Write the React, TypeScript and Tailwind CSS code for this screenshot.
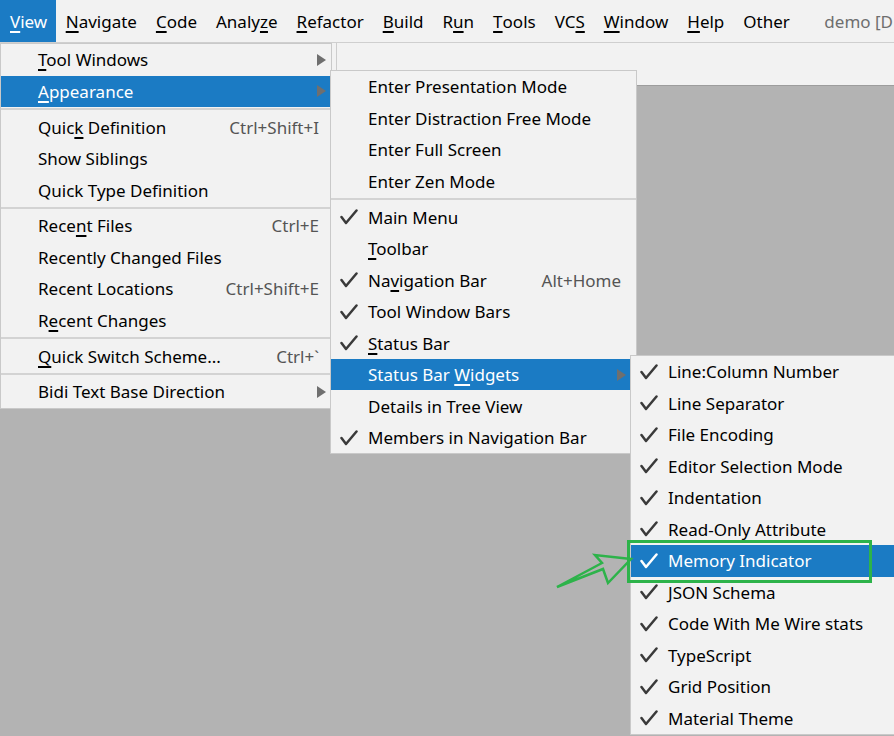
import React from "react";

// One row of a popup menu, or a separator
type Row =
  | "sep"
  | {
      label: string;
      u?: number; // index of the mnemonic letter
      shortcut?: string;
      checked?: boolean;
      sub?: boolean;
      active?: boolean;
    };

const viewMenu: Row[] = [
  { label: "Tool Windows", u: 0, sub: true },
  { label: "Appearance", u: 0, sub: true, active: true },
  "sep",
  { label: "Quick Definition", u: 4, shortcut: "Ctrl+Shift+I" },
  { label: "Show Siblings" },
  { label: "Quick Type Definition" },
  "sep",
  { label: "Recent Files", u: 4, shortcut: "Ctrl+E" },
  { label: "Recently Changed Files" },
  { label: "Recent Locations", shortcut: "Ctrl+Shift+E" },
  { label: "Recent Changes", u: 1 },
  "sep",
  { label: "Quick Switch Scheme...", u: 0, shortcut: "Ctrl+`" },
  "sep",
  { label: "Bidi Text Base Direction", sub: true },
];

const appearanceMenu: Row[] = [
  { label: "Enter Presentation Mode" },
  { label: "Enter Distraction Free Mode" },
  { label: "Enter Full Screen" },
  { label: "Enter Zen Mode" },
  "sep",
  { label: "Main Menu", checked: true },
  { label: "Toolbar", u: 0 },
  { label: "Navigation Bar", u: 2, checked: true, shortcut: "Alt+Home" },
  { label: "Tool Window Bars", checked: true },
  { label: "Status Bar", u: 0, checked: true },
  { label: "Status Bar Widgets", u: 11, sub: true, active: true },
  { label: "Details in Tree View" },
  { label: "Members in Navigation Bar", checked: true },
];

const widgetsMenu: Row[] = [
  { label: "Line:Column Number", checked: true },
  { label: "Line Separator", checked: true },
  { label: "File Encoding", checked: true },
  { label: "Editor Selection Mode", checked: true },
  { label: "Indentation", checked: true },
  { label: "Read-Only Attribute", checked: true },
  { label: "Memory Indicator", checked: true, active: true },
  { label: "JSON Schema", checked: true },
  { label: "Code With Me Wire stats", checked: true },
  { label: "TypeScript", checked: true },
  { label: "Grid Position", checked: true },
  { label: "Material Theme", checked: true },
];

const menuBar = [
  { label: "View", u: 0, active: true },
  { label: "Navigate", u: 0 },
  { label: "Code", u: 0 },
  { label: "Analyze", u: 5 },
  { label: "Refactor", u: 0 },
  { label: "Build", u: 0 },
  { label: "Run", u: 1 },
  { label: "Tools", u: 0 },
  { label: "VCS", u: 2 },
  { label: "Window", u: 0 },
  { label: "Help", u: 0 },
  { label: "Other" },
];

// Label with its mnemonic letter underlined
const Mnemonic = ({ label, u }: { label: string; u?: number }) => {
  if (u === undefined) return <>{label}</>;
  return (
    <>
      {label.slice(0, u)}
      <span className="underline decoration-[1.5px] underline-offset-[3px]">
        {label[u]}
      </span>
      {label.slice(u + 1)}
    </>
  );
};

const Check = ({ white }: { white?: boolean }) => (
  <svg width="18" height="16" viewBox="0 0 18 16" className="shrink-0">
    <path
      d="M1.5 8 L6 14 L16.5 1.5"
      fill="none"
      stroke={white ? "#ffffff" : "#3a3a3a"}
      strokeWidth="2.5"
      strokeLinecap="round"
      strokeLinejoin="round"
    />
  </svg>
);

const SubArrow = () => (
  <svg width="9" height="12" viewBox="0 0 9 12" className="shrink-0">
    <polygon points="0,0 9,6 0,12" fill="#6f6f6f" />
  </svg>
);

const Menu = ({
  rows,
  className,
  arrowPad,
  keyPad,
}: {
  rows: Row[];
  className: string;
  arrowPad: string;
  keyPad: string;
}) => (
  <div
    className={`absolute bg-[#f2f2f2] border border-[#c9c9c9] flex flex-col ${className}`}
  >
    {rows.map((row, i) =>
      row === "sep" ? (
        <div key={i} className="h-[4.25px] shrink-0 pt-px">
          <div className="h-[2px] bg-[#d3d3d3]" />
        </div>
      ) : (
        <div
          key={i}
          className={`h-[31.5px] flex items-center shrink-0 ${
            row.active ? "bg-[#1b7bc4] text-white" : "text-black"
          }`}
        >
          <div className="w-[37px] pl-[9px] flex items-center">
            {row.checked && <Check white={row.active} />}
          </div>
          <span className="flex-1 whitespace-nowrap">
            <Mnemonic label={row.label} u={row.u} />
          </span>
          {row.shortcut && (
            <span className={`text-[#555555] whitespace-nowrap ${keyPad}`}>
              {row.shortcut}
            </span>
          )}
          {row.sub && (
            <span className={arrowPad}>
              <SubArrow />
            </span>
          )}
        </div>
      )
    )}
  </div>
);

const App = () => {
  return (
    <div className="relative w-[894px] h-[736px] overflow-hidden flex flex-col bg-[#b3b3b3] font-['Noto_Sans',sans-serif] text-[17px] leading-none">
      {/* MENU BAR */}
      <div className="h-[43px] shrink-0 flex items-stretch bg-[#f2f2f2] border-b border-[#cfcfcf]">
        {menuBar.map((m) => (
          <div
            key={m.label}
            className={`flex items-center whitespace-nowrap ${
              m.active
                ? "bg-[#1b7bc4] text-white pl-[10px] pr-[9px]"
                : "text-black px-[9.5px]"
            }`}
          >
            <Mnemonic label={m.label} u={m.u} />
          </div>
        ))}
        <div className="flex items-center pl-[25px] text-[#6e6e6e] whitespace-nowrap">
          demo [D
        </div>
      </div>

      {/* TOOLBAR STRIP */}
      <div className="h-[43px] shrink-0 flex bg-[#f2f2f2] border-b border-[#9d9d9d]">
        <div className="w-[337px] border-r border-[#cdcdcd]" />
      </div>

      {/* EDITOR AREA */}
      <div className="flex-1 bg-[#b3b3b3]" />

      {/* POPUP MENUS */}
      <Menu
        rows={viewMenu}
        className="left-0 top-[43px] w-[332px]"
        arrowPad="pr-[5px]"
        keyPad="pr-[12px]"
      />
      <Menu
        rows={appearanceMenu}
        className="left-[330px] top-[70px] w-[307px]"
        arrowPad="pr-[10px]"
        keyPad="pr-[15px]"
      />
      <Menu
        rows={widgetsMenu}
        className="left-[630px] top-[355px] w-[300px]"
        arrowPad="pr-[10px]"
        keyPad="pr-[15px]"
      />

      {/* ANNOTATION */}
      <svg
        className="absolute left-0 top-0 pointer-events-none"
        width="894"
        height="736"
      >
        <rect
          x="628.5"
          y="541.5"
          width="242"
          height="40"
          fill="none"
          stroke="#2db34a"
          strokeWidth="3"
        />
        <polygon
          points="557,587 602,563 595,555 631,559 608,583 603,569"
          fill="none"
          stroke="#2db34a"
          strokeWidth="2.5"
          strokeLinejoin="miter"
        />
      </svg>
    </div>
  );
};

export default App;
